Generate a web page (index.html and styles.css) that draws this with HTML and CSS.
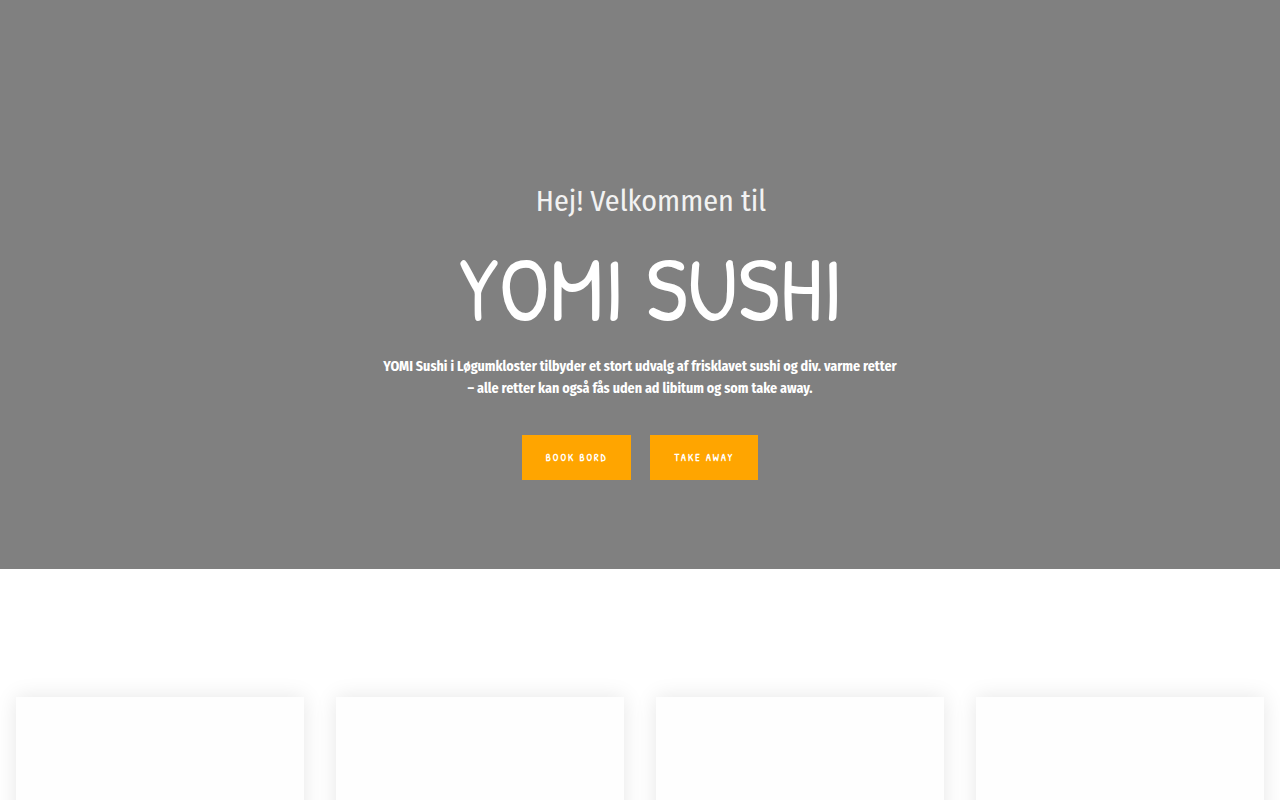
FILE: index.html
```html
<!DOCTYPE html>
<html lang="da">
<head>
    <meta charset="UTF-8">
    <meta name="viewport" content="width=device-width, initial-scale=1.0">
    <title>YOMI Sushi</title>
    <link rel="stylesheet" href="styles.css">
</head>
<body>
    <header class="hero">
        <div class="hero-heading">
            <p class="hero-welcome">Hej! Velkommen til</p>
            <h1 class="hero-title">YOMI SUSHI</h1>
        </div>
        <p class="hero-text">YOMI Sushi i Løgumkloster tilbyder et stort udvalg af frisklavet sushi og div. varme retter<br>– alle retter kan også fås uden ad libitum og som take away.</p>
        <div class="hero-buttons">
            <a class="btn" href="#book">BOOK BORD</a>
            <a class="btn" href="#takeaway">TAKE AWAY</a>
        </div>
    </header>

    <main class="cards">
        <article class="card"></article>
        <article class="card"></article>
        <article class="card"></article>
        <article class="card"></article>
    </main>
</body>
</html>
```
FILE: styles.css
```css
* {box-sizing: border-box}

body {
    margin: 0;
    background: #fff;
    color: #fff;
    font-family: "Fira Sans Condensed", "Roboto", sans-serif;
}

/* Hero */
.hero {
    display: flex;
    flex-direction: column;
    align-items: center;
    padding: 180px 16px 89px;
    background: #808080;
    text-align: center;
}

.hero-heading {
    padding-left: 22px;
}

.hero-welcome {
    margin: 0;
    color: #f2f2f2;
    font-size: 30px;
    line-height: 42px;
}

.hero-title {
    margin: 18px 0 20px;
    font-family: "Patrick Hand", "Roboto", sans-serif;
    font-size: 91px;
    font-weight: 400;
    line-height: 96px;
}

.hero-text {
    margin: 0;
    font-size: 14px;
    font-weight: 700;
    line-height: 22px;
}

.hero-buttons {
    display: flex;
    flex-wrap: wrap;
    justify-content: center;
    gap: 19px;
    margin-top: 35px;
}

.btn {
    padding: 0 24px;
    background: #ffa500;
    color: #fff;
    font-family: "Patrick Hand", "Roboto", sans-serif;
    font-size: 10px;
    font-weight: 700;
    letter-spacing: 2px;
    line-height: 45px;
    text-decoration: none;
}

/* Cards */
.cards {
    display: grid;
    grid-template-columns: repeat(4, 1fr);
    gap: 32px;
    padding: 128px 16px;
}

.card {
    min-height: 400px;
    background: #fefefe;
    box-shadow: 0 0 20px rgba(0, 0, 0, .1);
}
```
